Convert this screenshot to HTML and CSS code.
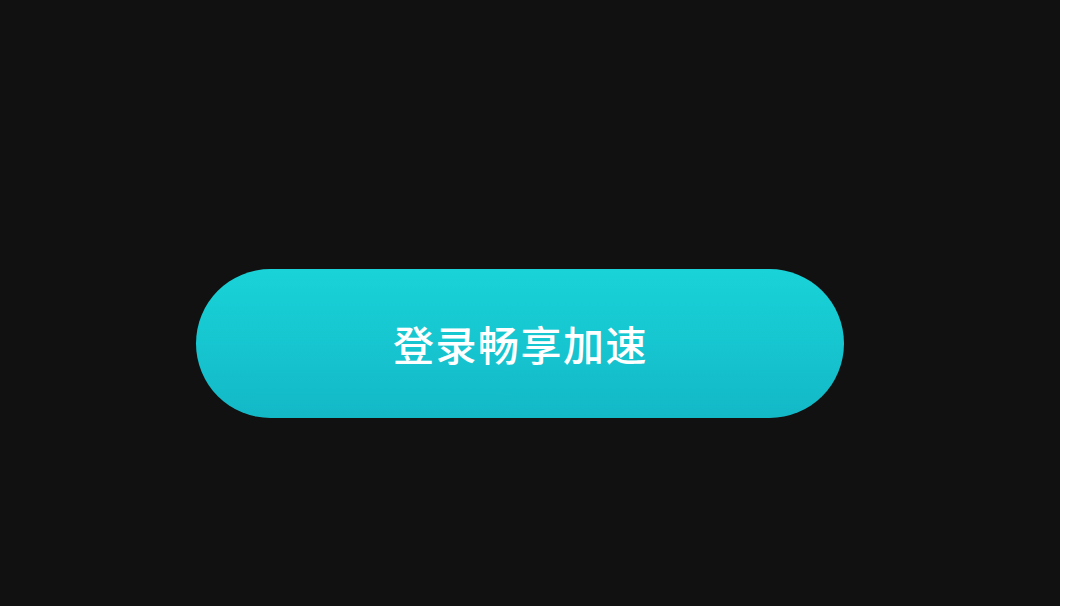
FILE: index.html
```html
<!DOCTYPE html>
<html lang="zh-CN">
<head>
<meta charset="utf-8">
<title>登录畅享加速</title>
<link rel="stylesheet" href="styles.css">
</head>
<body>
<main class="stage">
  <button class="login-btn" type="button">登录畅享加速</button>
</main>
</body>
</html>
```
FILE: styles.css
```css
html, body {
  margin: 0;
  padding: 0;
  background: #ffffff;
}
.stage {
  width: 1060px;
  height: 606px;
  background: #111111;
  box-sizing: border-box;
  padding: 269px 0 0 196px;
  display: flex;
  align-items: flex-start;
}
.login-btn {
  width: 648px;
  height: 149px;
  border: none;
  border-radius: 75px;
  background: linear-gradient(180deg, #19d3d8 0%, #13b8c7 100%);
  color: #ffffff;
  font-family: "Noto Sans CJK SC", "Noto Sans", sans-serif;
  font-size: 41px;
  font-weight: 500;
  letter-spacing: 1.5px;
  padding: 0 0 2px 1px;
  cursor: pointer;
}
```
